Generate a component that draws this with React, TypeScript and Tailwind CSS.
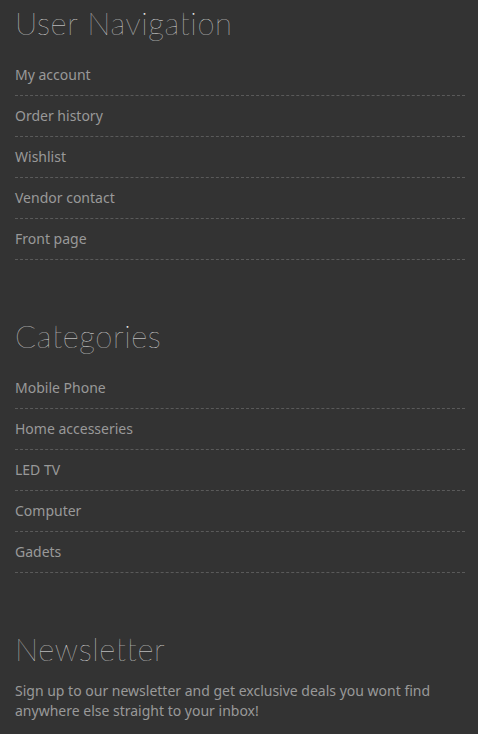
import React from 'react';

const sections: { title: string; links?: string[]; text?: string }[] = [
  {
    title: 'User Navigation',
    links: ['My account', 'Order history', 'Wishlist', 'Vendor contact', 'Front page'],
  },
  {
    title: 'Categories',
    links: ['Mobile Phone', 'Home accesseries', 'LED TV', 'Computer', 'Gadets'],
  },
  {
    title: 'Newsletter',
    text: 'Sign up to our newsletter and get exclusive deals you wont find anywhere else straight to your inbox!',
  },
];

const Heading: React.FC<{ children: React.ReactNode }> = ({ children }) => (
  <h2 className="m-0 text-[31px] leading-[36px] tracking-[0.6px] font-thin text-[#f2f2f2] font-['Lato',sans-serif]">
    {children}
  </h2>
);

export default function App() {
  return (
    <div className="min-h-screen bg-[#333333] px-[15px] pt-[5px] pb-8 font-['Noto_Sans',sans-serif] text-[14px] text-[#999999]">
      <div className="flex w-[450px] flex-col gap-[58px]">
        {sections.map((s) => (
          <section key={s.title}>
            <Heading>{s.title}</Heading>
            {s.links && (
              <ul className="mt-[14px]">
                {s.links.map((link) => (
                  <li key={link} className="border-b border-dashed border-[#5a5a5a]">
                    <a href="#" className="block py-[10px] leading-[20px] hover:text-white">
                      {link}
                    </a>
                  </li>
                ))}
              </ul>
            )}
            {s.text && <p className="mt-[14px] leading-[20px]">{s.text}</p>}
          </section>
        ))}
      </div>
    </div>
  );
}
